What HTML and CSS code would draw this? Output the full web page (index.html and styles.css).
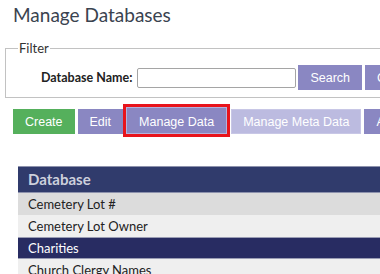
FILE: index.html
```html
<!DOCTYPE html>
<html lang="en">
<head>
    <meta charset="UTF-8">
    <title>Manage Databases</title>
    <link rel="stylesheet" href="styles.css">
</head>
<body>
    <div class="page">
        <h1 class="page-title">Manage Databases</h1>

        <!-- Filter -->
        <fieldset class="filter">
            <legend>Filter</legend>
            <div class="filter-row">
                <label for="db-name">Database Name:</label>
                <input type="text" id="db-name" class="text-input">
                <button class="btn btn-purple">Search</button>
                <button class="btn btn-purple">Clear</button>
            </div>
        </fieldset>

        <!-- Toolbar -->
        <div class="toolbar">
            <button class="btn btn-green">Create</button>
            <button class="btn btn-purple">Edit</button>
            <button class="btn btn-purple btn-active">Manage Data</button>
            <button class="btn btn-disabled">Manage Meta Data</button>
            <button class="btn btn-purple">Access</button>
        </div>

        <!-- Databases -->
        <div class="db-table">
            <div class="db-head">Database</div>
            <div class="db-row row-grey">Cemetery Lot #</div>
            <div class="db-row">Cemetery Lot Owner</div>
            <div class="db-row row-selected">Charities</div>
            <div class="db-row">Church Clergy Names</div>
        </div>
    </div>
</body>
</html>
```

FILE: styles.css
```css
* {
    margin: 0;
    padding: 0;
    box-sizing: border-box;
}

body {
    background-color: #fff;
    color: #333;
    font-family: 'Lato', sans-serif;
    overflow: hidden;
}

.page {
    width: 640px;
}

.page-title {
    font-size: 19px;
    font-weight: normal;
    color: #3a4350;
    line-height: 24px;
    padding: 3px 0 0 13px;
}

.filter {
    margin: 13px 0 0 5px;
    border: 1px solid #c2c2c2;
    padding: 9px 10px 7px 10px;
}

.filter legend {
    font-size: 13px;
    color: #333;
    margin-left: 2px;
    padding: 0 1px;
}

.filter-row {
    display: flex;
    align-items: center;
    padding-left: 25px;
}

.filter-row label {
    font-size: 12.5px;
    font-weight: bold;
    color: #222;
    margin-right: 5px;
}

.text-input {
    width: 159px;
    height: 20px;
    border: 1px solid #a5a5a5;
    border-radius: 2px;
    margin-right: 2px;
}

.btn {
    font-family: 'Liberation Sans', Arial, sans-serif;
    font-size: 12.5px;
    color: #fff;
    height: 25px;
    padding: 0 11px;
    border: 1px solid transparent;
    margin-right: 3px;
    cursor: pointer;
}

.btn-green {
    background-color: #55b05c;
}

.btn-purple {
    background-color: #8a87c2;
}

.btn-disabled {
    background-color: #bcbbe0;
    border-color: #c8c7e6;
}

.btn-active {
    height: 27px;
    border-color: #b4b2dc;
    outline: 3px solid #e8141c;
    padding: 2px 12px 0;
    margin-right: 4px;
}

.toolbar {
    display: flex;
    align-items: flex-end;
    margin: 9px 0 0 13px;
}

.db-table {
    margin: 32px 0 0 18px;
    font-size: 13px;
    color: #222;
}

.db-head {
    background-color: #303b6c;
    color: #cdd0dc;
    font-size: 15px;
    font-weight: bold;
    height: 27px;
    line-height: 25px;
    padding-left: 10px;
    border-top: 1px solid #8d92ad;
    border-bottom: 1px solid #8d92ad;
}

.db-row {
    height: 22px;
    line-height: 22px;
    padding-left: 10px;
    background-color: #efefef;
}

.row-grey {
    background-color: #dcdcdc;
}

.row-selected {
    background-color: #282c62;
    color: #fff;
    border-top: 1px solid #9a9db4;
    border-bottom: 1px solid #9a9db4;
    line-height: 20px;
}
```
